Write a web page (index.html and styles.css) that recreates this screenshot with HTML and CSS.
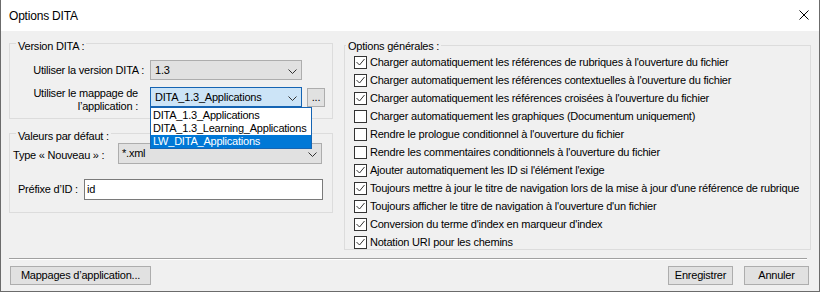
FILE: index.html
```html
<!DOCTYPE html>
<html lang="fr">
<head>
<meta charset="utf-8">
<title>Options DITA</title>
<link rel="stylesheet" href="styles.css">
</head>
<body>
<div class="window">
  <div class="titlebar">
    <span class="title">Options DITA</span>
    <svg class="close" width="10" height="10" viewBox="0 0 10 10"><path d="M0.5 0.5L9.5 9.5M9.5 0.5L0.5 9.5" stroke="#000" stroke-width="1" fill="none"/></svg>
  </div>
  <div class="body">
    <div class="main">
      <div class="left">
        <div class="group g1">
          <div class="gtitle">Version DITA :</div>
          <div class="row r1">
            <div class="lbl l1">Utiliser la version DITA :</div>
            <div class="combo c1"><span>1.3</span><svg class="arrow" width="9" height="5" viewBox="0 0 9 5"><path d="M0.5 0.5L4.5 4.5L8.5 0.5" stroke="#333" stroke-width="1" fill="none"/></svg></div>
          </div>
          <div class="row r2">
            <div class="lbl l2">Utiliser le mappage de<br>l’application :</div>
            <div class="combo-wrap">
              <div class="combo c1 focused"><span>DITA_1.3_Applications</span><svg class="arrow" width="9" height="5" viewBox="0 0 9 5"><path d="M0.5 0.5L4.5 4.5L8.5 0.5" stroke="#333" stroke-width="1" fill="none"/></svg></div>
              <div class="dropdown">
                <div class="item">DITA_1.3_Applications</div>
                <div class="item">DITA_1.3_Learning_Applications</div>
                <div class="item sel">LW_DITA_Applications</div>
              </div>
            </div>
            <div class="btn dots">...</div>
          </div>
        </div>
        <div class="group g2">
          <div class="gtitle">Valeurs par défaut :</div>
          <div class="row r3">
            <div class="lbl l3">Type « Nouveau » :</div>
            <div class="combo c3"><span>*.xml</span><svg class="arrow" width="9" height="5" viewBox="0 0 9 5"><path d="M0.5 0.5L4.5 4.5L8.5 0.5" stroke="#333" stroke-width="1" fill="none"/></svg></div>
          </div>
          <div class="row r4">
            <div class="lbl l4">Préfixe d’ID :</div>
            <div class="textbox">id</div>
          </div>
        </div>
      </div>
      <div class="group g3">
        <div class="gtitle gt3">Options générales :</div>
        <div class="checks">
          <div class="check"><span class="box on"><svg width="11" height="11" viewBox="0 0 11 11"><path d="M1.5 5L4.5 8L9.5 2" stroke="#333" stroke-width="1" fill="none"/></svg></span><span>Charger automatiquement les références de rubriques à l'ouverture du fichier</span></div>
          <div class="check"><span class="box on"><svg width="11" height="11" viewBox="0 0 11 11"><path d="M1.5 5L4.5 8L9.5 2" stroke="#333" stroke-width="1" fill="none"/></svg></span><span>Charger automatiquement les références contextuelles à l'ouverture du fichier</span></div>
          <div class="check"><span class="box on"><svg width="11" height="11" viewBox="0 0 11 11"><path d="M1.5 5L4.5 8L9.5 2" stroke="#333" stroke-width="1" fill="none"/></svg></span><span>Charger automatiquement les références croisées à l'ouverture du fichier</span></div>
          <div class="check"><span class="box"></span><span>Charger automatiquement les graphiques (Documentum uniquement)</span></div>
          <div class="check"><span class="box"></span><span>Rendre le prologue conditionnel à l'ouverture du fichier</span></div>
          <div class="check"><span class="box"></span><span>Rendre les commentaires conditionnels à l'ouverture du fichier</span></div>
          <div class="check"><span class="box on"><svg width="11" height="11" viewBox="0 0 11 11"><path d="M1.5 5L4.5 8L9.5 2" stroke="#333" stroke-width="1" fill="none"/></svg></span><span>Ajouter automatiquement les ID si l'élément l'exige</span></div>
          <div class="check"><span class="box on"><svg width="11" height="11" viewBox="0 0 11 11"><path d="M1.5 5L4.5 8L9.5 2" stroke="#333" stroke-width="1" fill="none"/></svg></span><span>Toujours mettre à jour le titre de navigation lors de la mise à jour d'une référence de rubrique</span></div>
          <div class="check"><span class="box on"><svg width="11" height="11" viewBox="0 0 11 11"><path d="M1.5 5L4.5 8L9.5 2" stroke="#333" stroke-width="1" fill="none"/></svg></span><span>Toujours afficher le titre de navigation à l'ouverture d'un fichier</span></div>
          <div class="check"><span class="box on"><svg width="11" height="11" viewBox="0 0 11 11"><path d="M1.5 5L4.5 8L9.5 2" stroke="#333" stroke-width="1" fill="none"/></svg></span><span>Conversion du terme d'index en marqueur d'index</span></div>
          <div class="check"><span class="box on"><svg width="11" height="11" viewBox="0 0 11 11"><path d="M1.5 5L4.5 8L9.5 2" stroke="#333" stroke-width="1" fill="none"/></svg></span><span>Notation URI pour les chemins</span></div>
        </div>
      </div>
    </div>
    <div class="sep"></div>
    <div class="buttons">
      <div class="btn b-map">Mappages d’application...</div>
      <div class="spacer"></div>
      <div class="btn b-ok">Enregistrer</div>
      <div class="btn b-cancel">Annuler</div>
    </div>
  </div>
</div>
</body>
</html>
```

FILE: styles.css
```css
* { box-sizing: border-box; margin: 0; padding: 0; }
body {
  margin: 0;
  font-family: "Liberation Sans", Arial, sans-serif;
  font-size: 11px;
  letter-spacing: -0.22px;
  color: #000;
  background: #fff;
}
.window {
  width: 820px;
  height: 292px;
  border: 1px solid #6b6b6b;
  border-top: 0;
  background: #f0f0f0;
  display: flex;
  flex-direction: column;
}
.titlebar {
  height: 31px;
  flex: none;
  background: #fff;
  display: flex;
  justify-content: space-between;
  align-items: flex-start;
  padding: 0 10px 0 8px;
}
.title {
  font-size: 12px;
  letter-spacing: -0.2px;
  line-height: 33px;
}
.close { margin-top: 10px; display: block; }
.body {
  flex: 1;
  padding: 12px 8px 0 8px;
  display: flex;
  flex-direction: column;
}
.main { display: flex; gap: 11px; align-items: flex-start; }
.left { width: 324px; display: flex; flex-direction: column; gap: 14px; }
.group { border: 1px solid #dcdcdc; }
.g1 { height: 76px; }
.g2 { height: 80px; }
.g3 { width: 467px; height: 205px; margin-top: 2px; }
.gtitle {
  width: fit-content;
  margin: -4px 0 0 6px;
  padding: 0 2px;
  background: #f0f0f0;
  line-height: 13px;
}
.gt3 { margin: -6px 0 0 1px; }
.row { display: flex; gap: 6px; }
.lbl { line-height: 13px; white-space: nowrap; flex: none; }
.r1 { margin-top: 7px; height: 20px; align-items: center; }
.l1 { width: 134px; text-align: right; }
.r2 { margin-top: 6px; align-items: flex-start; }
.l2 { width: 134px; text-align: right; padding-right: 6px; margin-top: 1px; line-height: 12.5px; }
.combo-wrap { position: relative; margin-top: 1px; }
.combo {
  display: flex;
  align-items: center;
  justify-content: space-between;
  padding: 0 4px;
  background: #e1e1e1;
  border: 1px solid #adadad;
  line-height: 13px;
  white-space: nowrap;
}
.c1 { width: 152px; height: 20px; }
.combo.focused { background: #cce4f7; border-color: #1564b3; }
.arrow { display: block; margin-top: 2px; flex: none; }
.dropdown {
  position: absolute;
  left: 0;
  top: 20px;
  width: 162px;
  background: #fff;
  border: 1px solid #1564b3;
  padding-top: 1px;
  z-index: 2;
}
.item { height: 13px; line-height: 13px; padding-left: 2px; white-space: nowrap; }
.item.sel { background: #0078d7; color: #fff; }
.btn {
  height: 19px;
  background: #e1e1e1;
  border: 1px solid #adadad;
  display: flex;
  align-items: center;
  justify-content: center;
  line-height: 13px;
  white-space: nowrap;
}
.dots { width: 18px; margin-left: -1px; margin-top: 2px; }
.r3 { gap: 0; height: 21px; align-items: center; }
.l3 { width: 108px; padding-left: 3px; padding-top: 3px; }
.c3 { width: 204px; height: 21px; padding-left: 3px; }
.r4 { gap: 0; margin-top: 15px; height: 21px; align-items: center; }
.l4 { width: 74px; padding-left: 8px; }
.textbox {
  width: 239px;
  height: 21px;
  background: #fff;
  border: 1px solid #7a7a7a;
  padding-left: 2px;
  display: flex;
  align-items: center;
  line-height: 13px;
}
.checks { display: flex; flex-direction: column; gap: 5px; margin-top: 3px; padding-left: 9px; }
.check { display: flex; align-items: center; gap: 3px; height: 13px; line-height: 13px; white-space: nowrap; }
.box {
  width: 13px;
  height: 13px;
  flex: none;
  border: 1px solid #333;
  background: #fff;
  display: block;
}
.box svg { display: block; }
.sep {
  margin-top: 8px;
  width: 798px;
  height: 2px;
  border-top: 1px solid #a0a0a0;
  border-bottom: 1px solid #fff;
}
.buttons { display: flex; margin-top: 6px; padding: 0 2px 0 1px; }
.spacer { flex: 1; }
.b-map { width: 141px; }
.b-ok { width: 65px; }
.b-cancel { width: 65px; margin-left: 11px; }
```
